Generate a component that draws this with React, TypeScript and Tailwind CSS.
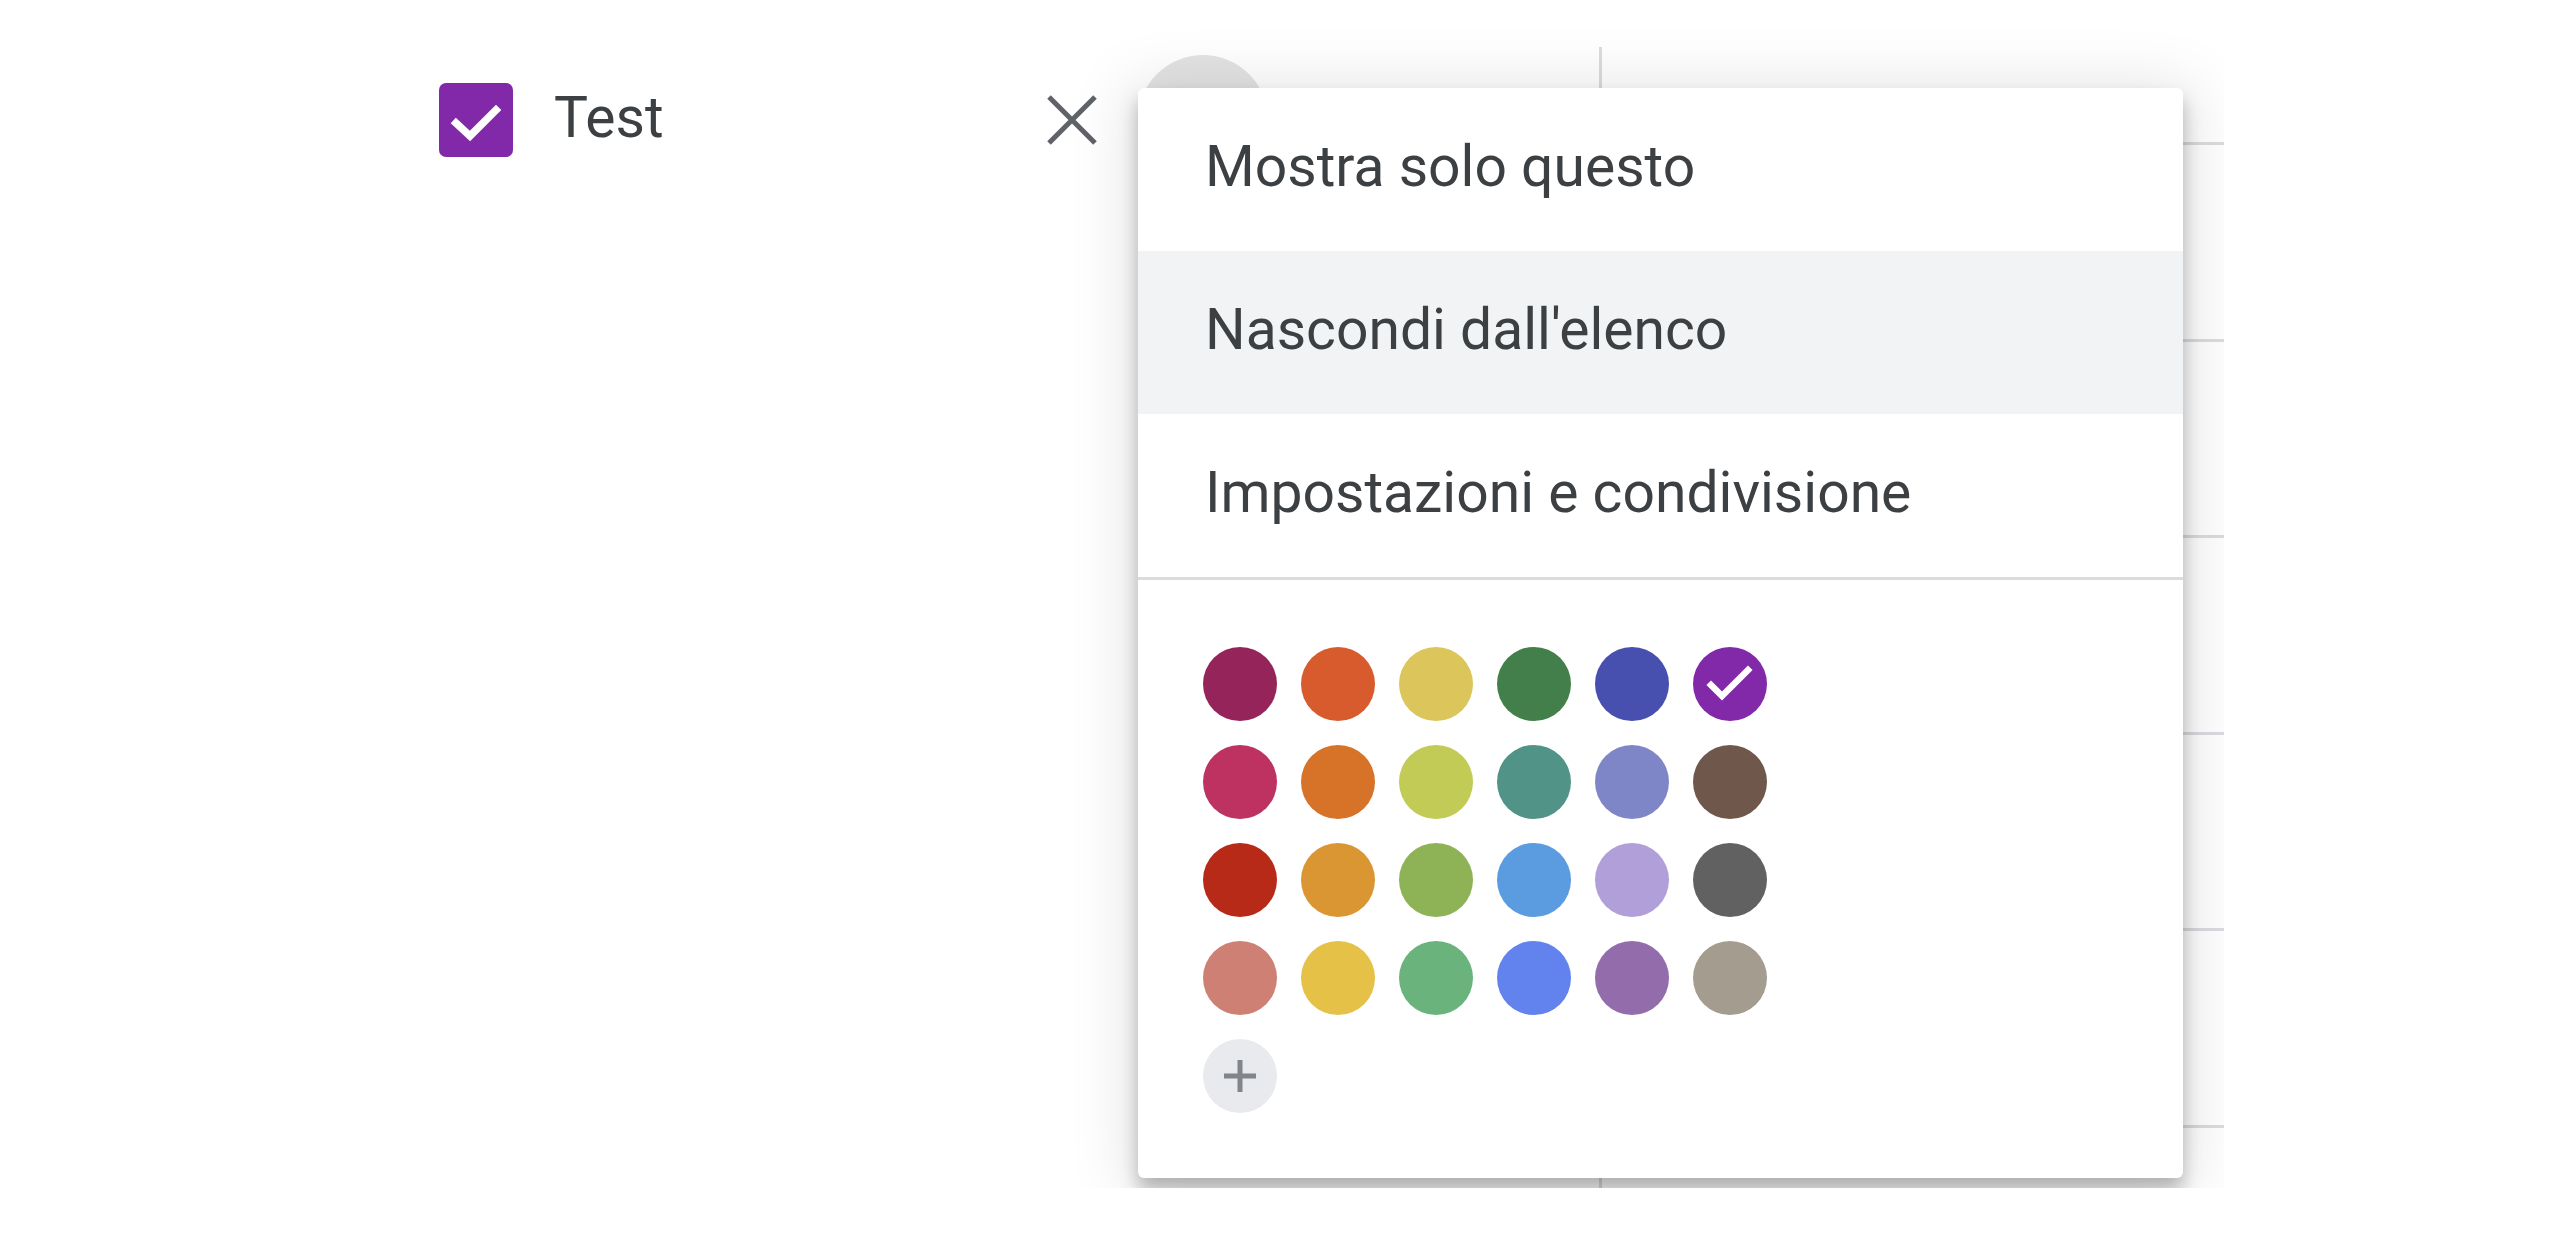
const swatches = [
  ["#95245a", "#d75b2d", "#dcc55a", "#437f4a", "#4750ae", "#8129a8"],
  ["#bd3260", "#d67329", "#c1cb55", "#519487", "#7f86c7", "#6f584b"],
  ["#b72a18", "#da9633", "#8db356", "#5b9be0", "#b09fd8", "#616161"],
  ["#cd8073", "#e6c148", "#6bb37d", "#6283ed", "#936cac", "#a59c90"],
];

const selected = "#8129a8";

function CheckBox() {
  return (
    <div className="flex h-[74px] w-[74px] shrink-0 items-center justify-center rounded-[7px] bg-[#8129a8]">
      <svg width="74" height="74" viewBox="0 0 74 74">
        <polyline
          points="17,40 31,53 57,27"
          fill="none"
          stroke="#fff"
          strokeWidth="7.5"
          strokeLinecap="square"
        />
      </svg>
    </div>
  );
}

function CloseIcon() {
  return (
    <svg width="64" height="64" viewBox="0 0 64 64" className="shrink-0">
      <path d="M9 9 L55 55 M55 9 L9 55" stroke="#5f6368" strokeWidth="5" />
    </svg>
  );
}

function CalendarItem() {
  return (
    <div className="flex h-[130px] items-center pl-[439px] pr-[32px]">
      <CheckBox />
      <span className="ml-[41px] -mt-[5px] text-[57px] leading-none text-[#3c4043]">Test</span>
      <div className="ml-auto mr-[34px]">
        <CloseIcon />
      </div>
      <div className="h-[130px] w-[130px] shrink-0 rounded-full bg-[#e3e3e3]" />
    </div>
  );
}

function Grid() {
  const rows = [0, 1, 2, 3, 4, 5];
  return (
    <div className="flex h-full flex-col border-l-[3px] border-[#dadce0]">
      <div className="h-[95px] shrink-0" />
      {rows.map((r) => (
        <div key={r} className="h-[196.6px] shrink-0 border-t-[3px] border-[#dadce0]" />
      ))}
    </div>
  );
}

function MenuItem({ label, active }: { label: string; active?: boolean }) {
  return (
    <div
      className={
        "flex h-[163px] items-center px-[67px] pb-[6px] text-[57px] text-[#3c4043] " +
        (active ? "bg-[#f1f3f4]" : "")
      }
    >
      {label}
    </div>
  );
}

function Swatch({ color }: { color: string }) {
  return (
    <div
      className="flex h-[74px] w-[74px] items-center justify-center rounded-full"
      style={{ backgroundColor: color }}
    >
      {color === selected && (
        <svg width="74" height="74" viewBox="0 0 74 74">
          <polyline
            points="18,38 29,49 55,23"
            fill="none"
            stroke="#fff"
            strokeWidth="6.5"
            strokeLinecap="square"
          />
        </svg>
      )}
    </div>
  );
}

function ColorMenu() {
  return (
    <div className="absolute left-[1138px] top-[88px] w-[1045px] rounded-[6px] bg-white shadow-[0_12px_18px_0_rgba(0,0,0,0.26),0_6px_60px_12px_rgba(0,0,0,0.1)]">
      <MenuItem label="Mostra solo questo" />
      <MenuItem label="Nascondi dall'elenco" active />
      <MenuItem label="Impostazioni e condivisione" />
      <div className="h-[3px] bg-[#dadce0]" />
      <div className="px-[65px] pb-[65px] pt-[67px]">
        <div className="grid w-fit grid-cols-6 gap-[24px]">
          {swatches.flat().map((c) => (
            <Swatch key={c} color={c} />
          ))}
          <div className="flex h-[74px] w-[74px] items-center justify-center rounded-full bg-[#e8eaed]">
            <svg width="34" height="34" viewBox="0 0 34 34">
              <path d="M17 1 V33 M1 17 H33" stroke="#80868b" strokeWidth="5" />
            </svg>
          </div>
        </div>
      </div>
    </div>
  );
}

export default function App() {
  return (
    <div className="relative h-[1252px] w-[2557px] overflow-hidden bg-white font-['Roboto','Liberation_Sans',sans-serif]">
      <div className="flex h-[1188px] w-[2224px]">
        <aside className="w-[1300px] shrink-0 pt-[55px]">
          <CalendarItem />
        </aside>
        <main className="flex-1 pl-[299px] pt-[47px]">
          <Grid />
        </main>
      </div>
      <div className="absolute left-0 top-0 h-[1188px] w-[2224px] overflow-hidden">
        <ColorMenu />
      </div>
    </div>
  );
}
